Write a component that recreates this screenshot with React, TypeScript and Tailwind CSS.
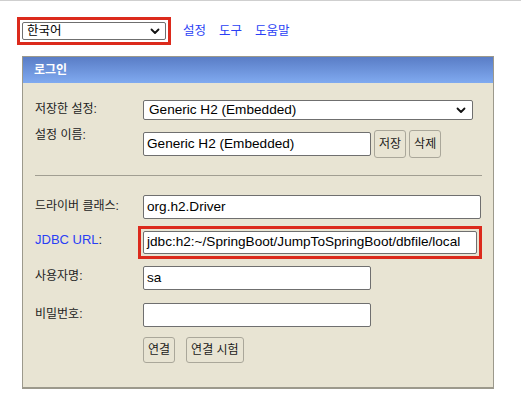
import React from "react";

const FONT = { fontFamily: '"Liberation Sans", "Noto Sans CJK KR", sans-serif' };

function Chevron() {
  return (
    <svg width="10" height="7" viewBox="0 0 10 7" className="shrink-0">
      <path d="M1.5 1.5 L5 5 L8.5 1.5" fill="none" stroke="#111" strokeWidth="1.8" strokeLinecap="round" strokeLinejoin="round" />
    </svg>
  );
}

function Field({ value, w, h = "h-[24px]" }: { value: string; w: string; h?: string }) {
  return (
    <div className={`${w} ${h} flex items-center bg-white border border-[#6f6f6f] rounded-[2px] pl-[3px] text-[13.6px] text-black`}>
      {value}
    </div>
  );
}

function Btn({ label }: { label: string }) {
  return (
    <div className="h-full flex items-center px-[4px] border border-[#aaa79a] rounded-[3px] text-[12px] text-[#1a1a1a]">
      {label}
    </div>
  );
}

function Label({ children, className = "" }: { children: React.ReactNode; className?: string }) {
  return <div className={`w-[108px] shrink-0 text-[12px] text-[#222] ${className}`}>{children}</div>;
}

export default function App() {
  return (
    <div className="w-[521px] h-[420px] bg-white border-t border-[#cfcfcf] overflow-hidden" style={FONT}>
      {/* top bar */}
      <div className="flex items-center pl-[17px] pt-[16px]">
        <div className="w-[154px] h-[28px] border-[3px] border-[#dc2a1c] p-[2px]">
          <div className="h-full flex items-center justify-between bg-white border border-[#6f6f6f] rounded-[2px] pl-[4px] pr-[5px] text-black">
            <span className="text-[12.5px]">한국어</span>
            <Chevron />
          </div>
        </div>
        <div className="flex gap-[13px] ml-[12px] text-[12.5px] text-[#2a3ff5]">
          <span>설정</span>
          <span>도구</span>
          <span>도움말</span>
        </div>
      </div>

      {/* login panel */}
      <div className="ml-[22px] mt-[11px] w-[472px] border border-b-2 border-[#9c998c] bg-[#e8e4d3]">
        <div className="h-[26px] flex items-center pl-[11px] bg-gradient-to-b from-[#5a7dc6] to-[#80aaf0] text-white text-[12px] font-bold">
          로그인
        </div>

        <div className="pl-[12px] pr-[11px] pb-[24px]">
          <div className="flex items-center mt-[17px] h-[20px]">
            <Label className="-mt-[3px]">저장한 설정:</Label>
            <div className="w-[330px] h-full flex items-center justify-between bg-white border border-[#6f6f6f] rounded-[2px] pl-[5px] pr-[6px] text-[13.6px] text-black">
              <span>Generic H2 (Embedded)</span>
              <Chevron />
            </div>
          </div>

          <div className="flex items-center mt-[10px] h-[28px]">
            <Label className="self-start -mt-[4px]">설정 이름:</Label>
            <Field value="Generic H2 (Embedded)" w="w-[228px]" />
            <div className="flex gap-[3px] ml-[3px] h-full">
              <Btn label="저장" />
              <Btn label="삭제" />
            </div>
          </div>

          <div className="mt-[17px] h-px bg-[#a19e92]" />

          <div className="flex items-center mt-[19px]">
            <Label className="-mt-[2px]">드라이버 클래스:</Label>
            <Field value="org.h2.Driver" w="w-[338px]" />
          </div>

          <div className="flex items-center mt-[7px] h-[33px]">
            <div className="w-[108px] shrink-0 text-[13px] text-[#222] -mt-[5px]">
              <span className="text-[#2a3ff5]">JDBC URL</span>:
            </div>
            <div className="-ml-[5px] w-[348px] h-full border-[3px] border-[#dc2a1c] p-[2px]">
              <Field value="jdbc:h2:~/SpringBoot/JumpToSpringBoot/dbfile/local" w="w-full" h="h-full" />
            </div>
          </div>

          <div className="flex items-center mt-[7px]">
            <Label className="-mt-[4px]">사용자명:</Label>
            <Field value="sa" w="w-[228px]" />
          </div>

          <div className="flex items-center mt-[13px]">
            <Label className="-mt-[3px]">비밀번호:</Label>
            <Field value="" w="w-[228px]" />
          </div>

          <div className="flex items-center mt-[10px] h-[26px]">
            <div className="w-[108px] shrink-0" />
            <div className="flex gap-[11px] h-full">
              <Btn label="연결" />
              <Btn label="연결 시험" />
            </div>
          </div>
        </div>
      </div>
    </div>
  );
}
